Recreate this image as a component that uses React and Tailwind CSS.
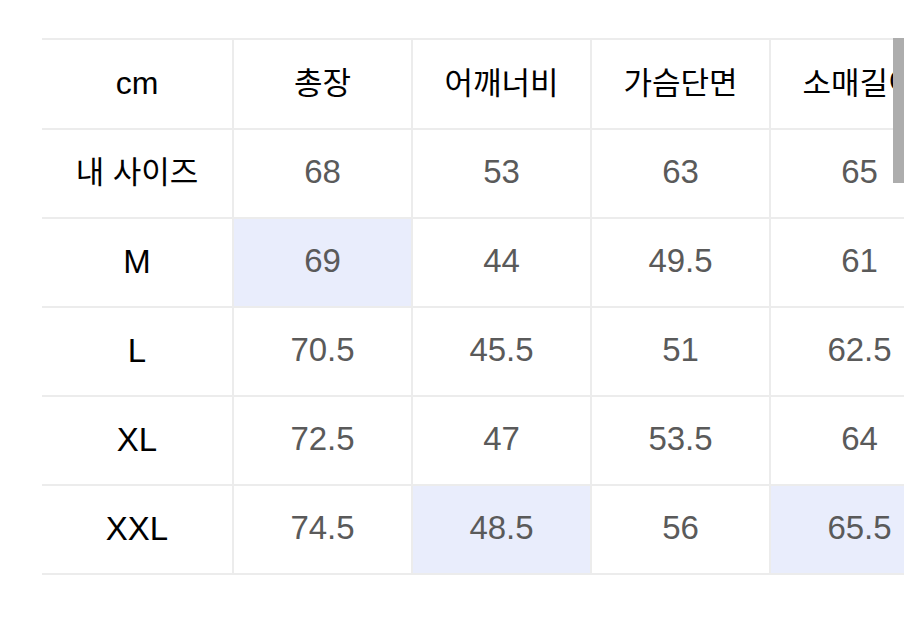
const headers = ['총장', '어깨너비', '가슴단면', '소매길이'];

const rows = [
  { label: '내 사이즈', ko: true, values: ['68', '53', '63', '65'], hl: [] },
  { label: 'M', values: ['69', '44', '49.5', '61'], hl: [0] },
  { label: 'L', values: ['70.5', '45.5', '51', '62.5'], hl: [] },
  { label: 'XL', values: ['72.5', '47', '53.5', '64'], hl: [] },
  { label: 'XXL', values: ['74.5', '48.5', '56', '65.5'], hl: [1, 3] },
];

const font = { fontFamily: '"Liberation Sans", "Noto Sans CJK KR", sans-serif' };

export default function App() {
  return (
    <div className="relative w-full h-[618px] bg-white overflow-hidden" style={font}>
      <div className="pt-[38px] pl-[42px]">
        <div className="w-[906px] border-t-2 border-[#ececec]">
          <div className="flex h-[90px] border-b-2 border-[#ececec] text-[31px] text-black">
            <div className="w-[190px] flex items-center justify-center text-[32px] pb-[2px]">cm</div>
            {headers.map((h) => (
              <div
                key={h}
                className="w-[179px] border-l-2 border-[#ececec] flex items-center justify-center"
              >
                {h}
              </div>
            ))}
          </div>
          {rows.map((r) => (
            <div
              key={r.label}
              className="flex h-[89px] border-b-2 border-[#ececec] text-[33px]"
            >
              <div
                className={`w-[190px] flex items-center justify-center text-black ${
                  r.ko ? 'text-[31px]' : 'pb-[2px]'
                }`}
              >
                {r.label}
              </div>
              {r.values.map((v, i) => (
                <div
                  key={i}
                  className={`w-[179px] border-l-2 border-[#ececec] flex items-center justify-center pb-[3px] text-[#5a5a5a] ${
                    r.hl.includes(i) ? 'bg-[#e9edfc]' : ''
                  }`}
                >
                  {v}
                </div>
              ))}
            </div>
          ))}
        </div>
      </div>
      {/* scrollbar thumb */}
      <div className="absolute right-0 top-[38px] w-[11px] h-[145px] bg-[#adadad]" />
    </div>
  );
}
